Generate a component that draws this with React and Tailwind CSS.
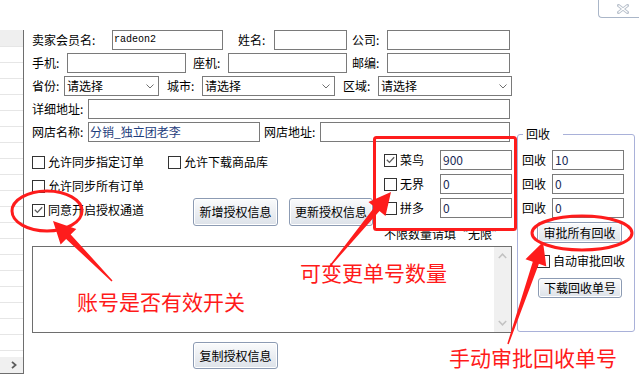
import React from 'react'

const ff = "font-['Noto_Sans_CJK_SC',sans-serif]"

function Box({ className = '', children }) {
  return <div className={`h-[20px] shrink-0 border border-[#7a7a7a] bg-white flex items-center ${className}`}>{children}</div>
}

function Label({ className = '', children }) {
  return <span className={`shrink-0 whitespace-nowrap text-[12px] leading-[20px] ${className}`}>{children}</span>
}

function Select({ className = '' }) {
  return (
    <Box className={`justify-between pl-[2px] pr-[4px] ${className}`}>
      <span className="text-[12px] leading-none">请选择</span>
      <svg width="8" height="5" viewBox="0 0 8 5">
        <path d="M0.5 0.5 L4 4 L7.5 0.5" fill="none" stroke="#707070" strokeWidth="1" />
      </svg>
    </Box>
  )
}

function Check({ checked, children, className = '' }) {
  return (
    <div className={`flex items-center ${className}`}>
      <span className="w-[13px] h-[13px] shrink-0 border border-[#333333] bg-white flex items-center justify-center">
        {checked && (
          <svg width="9" height="8" viewBox="0 0 9 8">
            <path d="M0.8 3.8 L3.4 6.4 L8.2 1.2" fill="none" stroke="#5a5a5a" strokeWidth="1.3" />
          </svg>
        )}
      </span>
      <span className="ml-[3px] text-[12px] leading-none whitespace-nowrap">{children}</span>
    </div>
  )
}

function Btn({ className = '', children }) {
  return (
    <div className={`shrink-0 flex items-center justify-center rounded-[3px] border border-[#8c9bb3] bg-linear-to-b from-[#fafbfc] to-[#dde2e9] shadow-[inset_0_0_0_1px_#ffffff] text-[12px] leading-none ${className}`}>
      {children}
    </div>
  )
}

// tapered arrow, thin at the tail and a wide head at the tip
function arrowPoints(tail, tip, headLen = 22, headW = 11, shaftW = 3.2, tailW = 0.7) {
  const dx = tip[0] - tail[0]
  const dy = tip[1] - tail[1]
  const len = Math.hypot(dx, dy)
  const d = [dx / len, dy / len]
  const p = [-d[1], d[0]]
  const base = [tip[0] - d[0] * headLen, tip[1] - d[1] * headLen]
  const pt = (o, k) => `${(o[0] + p[0] * k).toFixed(1)},${(o[1] + p[1] * k).toFixed(1)}`
  return [pt(tail, tailW), pt(base, shaftW), pt(base, headW), `${tip[0]},${tip[1]}`, pt(base, -headW), pt(base, -shaftW), pt(tail, -tailW)].join(' ')
}

export default function App() {
  const red = '#fe1c1c'
  const listRows = Array.from({ length: 21 }, (_, i) => i)

  return (
    <div className={`relative w-[639px] h-[392px] overflow-hidden bg-white text-black ${ff}`}>
      {/* title strip with close button */}
      <div className="h-[30px] flex justify-end">
        <div className="w-[41px] h-[18px] border-l border-b border-[#aab6c8] rounded-bl-[4px] flex items-center justify-center pl-[7px]">
          <svg width="12" height="10" viewBox="0 0 12 10">
            <path d="M1.5 1.5 L10.5 8.5 M10.5 1.5 L1.5 8.5" stroke="#b9c1cc" strokeWidth="3" strokeLinecap="square" />
            <path d="M1.5 1.5 L10.5 8.5 M10.5 1.5 L1.5 8.5" stroke="#ffffff" strokeWidth="1.2" />
          </svg>
        </div>
      </div>

      <div className="flex">
        {/* list on the left edge */}
        <div className="w-[24px] h-[344px] shrink-0 border-r border-b border-[#6e6e6e] flex flex-col">
          <div className="flex-1 overflow-hidden">
            <div className="h-[16px] bg-[#efefef]" />
            {listRows.map(i => (
              <div key={i} className="h-[16px] border-t border-[#e6e6e6]" />
            ))}
          </div>
          <div className="h-[16px] bg-[#f0f0f0] flex items-center justify-end pr-[6px]">
            <svg width="6" height="8" viewBox="0 0 6 8">
              <path d="M1 0.8 L4.6 4 L1 7.2" fill="none" stroke="#5c5c5c" strokeWidth="1.8" />
            </svg>
          </div>
        </div>

        <div className="ml-[8px] flex flex-col gap-[3px]">
          <div className="flex items-center h-[20px]">
            <Label className="w-[80px]">卖家会员名:</Label>
            <Box className="w-[111px] pl-[1px]">
              <span className="font-['Liberation_Mono',monospace] text-[10px] leading-none">radeon2</span>
            </Box>
            <Label className="ml-[15px] w-[36px]">姓名:</Label>
            <Box className="w-[73px]" />
            <Label className="ml-[5px] w-[35px]">公司:</Label>
            <Box className="w-[123px]" />
          </div>

          <div className="flex items-center h-[20px]">
            <Label className="w-[35px]">手机:</Label>
            <Box className="w-[119px]" />
            <Label className="ml-[7px] w-[35px]">座机:</Label>
            <Box className="w-[119px]" />
            <Label className="ml-[5px] w-[35px]">邮编:</Label>
            <Box className="w-[123px]" />
          </div>

          <div className="flex items-center h-[20px]">
            <Label className="w-[32px]">省份:</Label>
            <Select className="w-[95px]" />
            <Label className="ml-[8px] w-[35px]">城市:</Label>
            <Select className="w-[133px]" />
            <Label className="ml-[8px] w-[35px]">区域:</Label>
            <Select className="w-[134px]" />
          </div>

          <div className="flex items-center h-[20px]">
            <Label className="w-[56px]">详细地址:</Label>
            <Box className="w-[422px]" />
          </div>

          <div className="flex">
            <div className="w-[480px] flex flex-col">
              <div className="flex items-center h-[20px]">
                <Label className="w-[56px]">网店名称:</Label>
                <Box className="w-[172px] pl-[1px]">
                  <span className="text-[12px] leading-none text-[#1d3d7c]">分销_独立团老李</span>
                </Box>
                <Label className="ml-[4px] w-[56px]">网店地址:</Label>
                <Box className="w-[190px]" />
              </div>

              <div className="flex h-[104px]">
                <div className="w-[352px] flex flex-col pt-[8px]">
                  <div className="flex items-center h-[24px]">
                    <Check className="w-[136px]">允许同步指定订单</Check>
                    <Check>允许下载商品库</Check>
                  </div>
                  <div className="flex items-center h-[24px]">
                    <Check>允许同步所有订单</Check>
                  </div>
                  <div className="flex items-start">
                    <Check checked className="w-[161px] h-[24px]">同意开启授权通道</Check>
                    <Btn className="w-[85px] h-[28px]">新增授权信息</Btn>
                    <Btn className="ml-[11px] w-[84px] h-[28px]">更新授权信息</Btn>
                  </div>
                </div>

                <div className="w-[128px] flex flex-col pt-[8px]">
                  <div className="flex flex-col gap-[4px]">
                    {[['菜鸟', '900', true], ['无界', '0', false], ['拼多', '0', false]].map(([name, val, on]) => (
                      <div key={name} className="flex items-center h-[20px]">
                        <Check checked={on} className="w-[56px]">{name}</Check>
                        <Box className="w-[72px] pl-[2px]">
                          <span className="text-[12px] leading-none text-[#1a2a55]">{val}</span>
                        </Box>
                      </div>
                    ))}
                  </div>
                  <div className="mt-[8px] text-[12px] leading-[16px] whitespace-nowrap">不限数量请填“无限”</div>
                </div>
              </div>

              <div className="w-[480px] h-[87px] border border-[#6e6e6e] bg-white flex">
                <div className="flex-1" />
                <div className="w-[17px] bg-[#f0f0f0] flex flex-col items-center justify-between py-[6px]">
                  <svg width="9" height="6" viewBox="0 0 9 6">
                    <path d="M0.8 5 L4.5 1.2 L8.2 5" fill="none" stroke="#c2c2c2" strokeWidth="1.5" />
                  </svg>
                  <svg width="9" height="6" viewBox="0 0 9 6">
                    <path d="M0.8 1 L4.5 4.8 L8.2 1" fill="none" stroke="#c2c2c2" strokeWidth="1.5" />
                  </svg>
                </div>
              </div>

              <Btn className="mt-[9px] ml-[161px] w-[85px] h-[27px]">复制授权信息</Btn>
            </div>

            {/* 回收 group */}
            <div className="relative ml-[5px] mt-[12px] w-[118px] h-[198px] border border-[#a9b1d9] rounded-[3px] pt-[15px] pl-[4px]">
              <span className="absolute -top-[9px] left-[5px] bg-white pl-[3px] pr-[13px] text-[12px] leading-[16px]">回收</span>
              <div className="flex flex-col gap-[4px]">
                {['10', '0', '0'].map((v, i) => (
                  <div key={i} className="flex items-center h-[20px]">
                    <Label className="w-[30px]">回收</Label>
                    <Box className="w-[72px] pl-[2px]">
                      <span className="text-[12px] leading-none text-[#1a2a55]">{v}</span>
                    </Box>
                  </div>
                ))}
              </div>
              <Btn className="mt-[4px] ml-[15px] w-[85px] h-[21px]">审批所有回收</Btn>
              <div className="mt-[6px] ml-[15px] h-[24px] flex items-center">
                <Check>自动审批回收</Check>
              </div>
              <Btn className="mt-[5px] ml-[16px] w-[84px] h-[20px]">下载回收单号</Btn>
            </div>
          </div>
        </div>
      </div>

      {/* red annotations drawn over the form */}
      <svg className="absolute inset-0 pointer-events-none" width="639" height="392" viewBox="0 0 639 392">
        <ellipse cx="47" cy="211" rx="35" ry="20" fill="none" stroke={red} strokeWidth="3" />
        <polygon points={arrowPoints([112, 281], [53, 221])} fill={red} />
        <rect x="374.5" y="137.5" width="141" height="92" rx="2" fill="none" stroke={red} strokeWidth="3" />
        <polygon points={arrowPoints([330, 266], [391, 192])} fill={red} />
        <ellipse cx="582" cy="233" rx="50" ry="17" fill="none" stroke={red} strokeWidth="3" />
        <polygon points={arrowPoints([508, 344], [543, 242])} fill={red} />
      </svg>
      <div className="absolute left-[77px] top-[291px] text-[21px] leading-[21px] text-[#ff1a1a] whitespace-nowrap pointer-events-none">账号是否有效开关</div>
      <div className="absolute left-[300px] top-[262px] text-[21px] leading-[21px] text-[#ff1a1a] whitespace-nowrap pointer-events-none">可变更单号数量</div>
      <div className="absolute left-[449px] top-[347px] text-[21px] leading-[21px] text-[#ff1a1a] whitespace-nowrap pointer-events-none">手动审批回收单号</div>
    </div>
  )
}
